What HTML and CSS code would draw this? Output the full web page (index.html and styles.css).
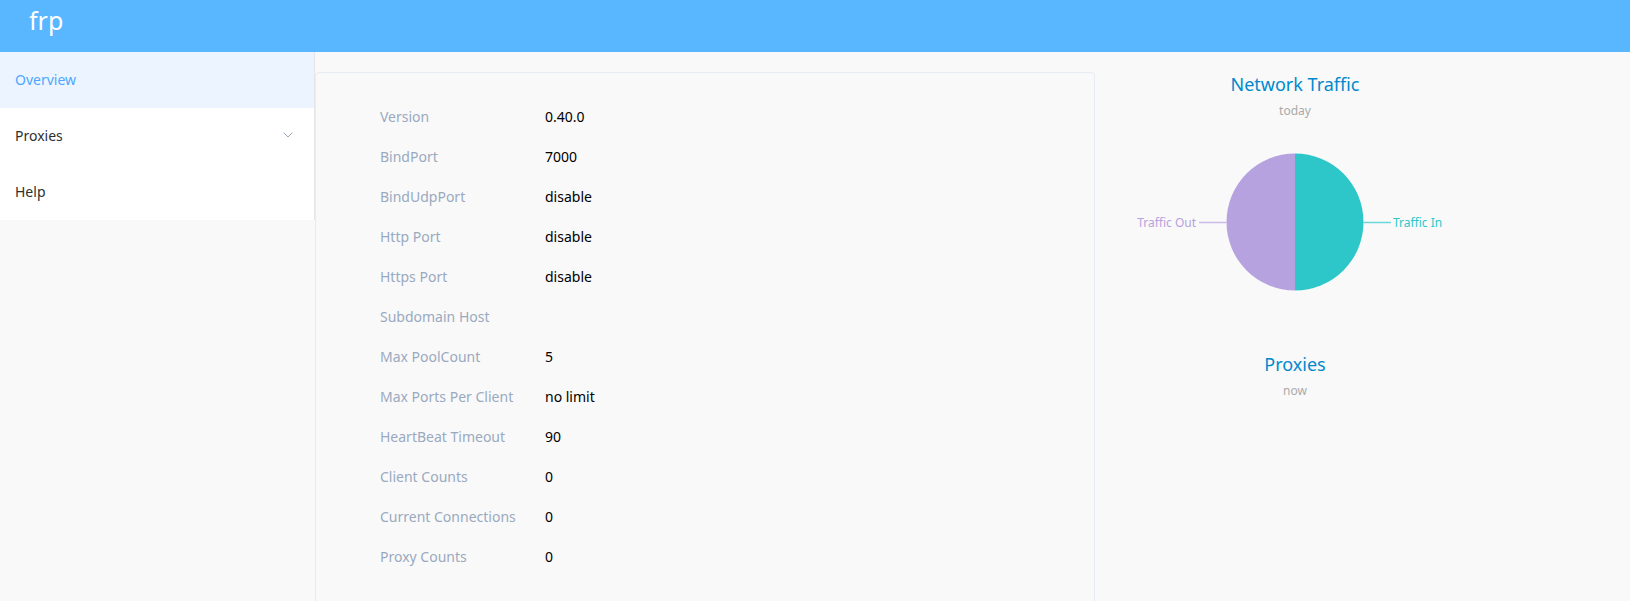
FILE: index.html
```html
<!DOCTYPE html>
<html>
<head>
<meta charset="utf-8">
<link rel="stylesheet" href="styles.css">
</head>
<body>
<header class="topbar"><span class="brand">frp</span></header>
<div class="layout">
  <aside class="sidebar">
    <ul class="menu">
      <li class="menu-item active">Overview</li>
      <li class="menu-item">Proxies
        <svg class="chevron" width="10" height="6" viewBox="0 0 10 6"><path d="M0.5 0.5 L5 5 L9.5 0.5" fill="none" stroke="#97a8be" stroke-width="1"/></svg>
      </li>
      <li class="menu-item">Help</li>
    </ul>
  </aside>
  <main class="main">
    <section class="card">
      <div class="row"><span class="label">Version</span><span class="value">0.40.0</span></div>
      <div class="row"><span class="label">BindPort</span><span class="value">7000</span></div>
      <div class="row"><span class="label">BindUdpPort</span><span class="value">disable</span></div>
      <div class="row"><span class="label">Http Port</span><span class="value">disable</span></div>
      <div class="row"><span class="label">Https Port</span><span class="value">disable</span></div>
      <div class="row"><span class="label">Subdomain Host</span><span class="value"></span></div>
      <div class="row"><span class="label">Max PoolCount</span><span class="value">5</span></div>
      <div class="row"><span class="label">Max Ports Per Client</span><span class="value">no limit</span></div>
      <div class="row"><span class="label">HeartBeat Timeout</span><span class="value">90</span></div>
      <div class="row"><span class="label">Client Counts</span><span class="value">0</span></div>
      <div class="row"><span class="label">Current Connections</span><span class="value">0</span></div>
      <div class="row"><span class="label">Proxy Counts</span><span class="value">0</span></div>
    </section>
    <section class="charts">
      <div class="chart traffic">
        <div class="chart-title">Network Traffic</div>
        <div class="chart-sub">today</div>
        <svg class="pie" width="400" height="170" viewBox="0 0 400 170">
          <path d="M200 16.5 A68.5 68.5 0 0 1 200 153.5 Z" fill="#2ec7c9"/>
          <path d="M200 16.5 A68.5 68.5 0 0 0 200 153.5 Z" fill="#b6a2de"/>
          <line x1="104" y1="85.5" x2="131.5" y2="85.5" stroke="#b6a2de" stroke-opacity="0.7" stroke-width="1.5"/>
          <line x1="268.5" y1="85.5" x2="296" y2="85.5" stroke="#2ec7c9" stroke-opacity="0.7" stroke-width="1.5"/>
          <text class="pie-label" x="101" y="89.5" text-anchor="end" fill="#b6a2de">Traffic Out</text>
          <text class="pie-label" x="298" y="89.5" text-anchor="start" fill="#2ec7c9">Traffic In</text>
        </svg>
      </div>
      <div class="chart proxies">
        <div class="chart-title">Proxies</div>
        <div class="chart-sub">now</div>
      </div>
    </section>
  </main>
</div>
</body>
</html>
```
FILE: styles.css
```css
* { box-sizing: border-box; }
html, body {
  margin: 0;
  padding: 0;
  height: 100%;
  overflow: hidden;
}
body {
  background: #f9f9f9;
  font-family: "Noto Sans", "Open Sans", sans-serif;
  font-size: 14px;
}
.topbar {
  height: 52px;
  background: #58b7ff;
  padding-left: 29px;
}
.brand {
  display: block;
  color: #fff;
  font-size: 25px;
  line-height: 40px;
}
.layout {
  display: flex;
  align-items: flex-start;
}
.sidebar {
  width: 315px;
  flex: none;
}
.menu {
  list-style: none;
  margin: 0;
  padding: 0;
  background: #fff;
  border-right: 1px solid #e6e6e6;
}
.menu-item {
  height: 56px;
  line-height: 56px;
  padding: 0 21px 0 15px;
  color: #2d2f33;
  display: flex;
  align-items: center;
  justify-content: space-between;
}
.menu-item.active {
  background: #ecf5ff;
  color: #4da6ff;
}
.chevron { display: block; margin-top: -2px; }
.main {
  display: flex;
  padding-top: 20px;
}
.card {
  width: 780px;
  height: 540px;
  border: 1px solid #e6ebf5;
  border-radius: 4px;
  padding: 24px 0 0 64px;
}
.row {
  display: flex;
  height: 40px;
  align-items: center;
  line-height: 20px;
}
.label {
  width: 165px;
  color: #99a9bf;
}
.value {
  color: #000;
}
.charts {
  width: 400px;
  flex: none;
}
.chart {
  display: flex;
  flex-direction: column;
  align-items: center;
}
.chart-title {
  color: #008acd;
  font-size: 18px;
  line-height: 24px;
}
.chart-sub {
  color: #aaa;
  font-size: 12px;
  line-height: 16px;
  margin-top: 7px;
}
.pie {
  display: block;
  margin-top: 18px;
}
.pie-label {
  font-family: "Noto Sans", "Open Sans", sans-serif;
  font-size: 12px;
}
.proxies {
  margin-top: 45px;
}
```
